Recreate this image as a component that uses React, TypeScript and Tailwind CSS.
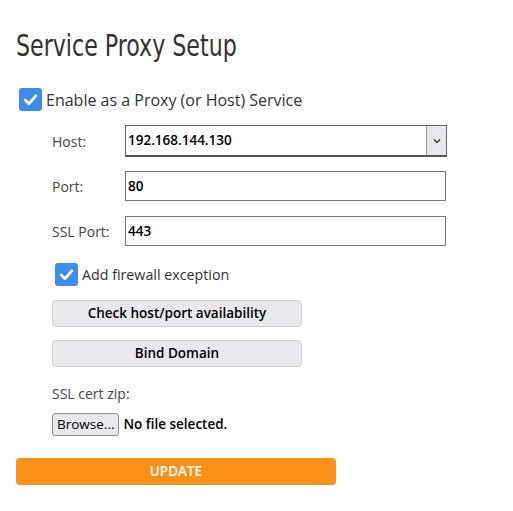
import React from "react";

function Check({ size = 22 }: { size?: number }) {
  return (
    <span
      className="inline-flex items-center justify-center rounded-[3px] bg-[#3d8ee8] shrink-0"
      style={{ width: size, height: size }}
    >
      <svg width={size - 6} height={size - 6} viewBox="0 0 16 16">
        <path d="M3 8.5 L6.5 12 L13 4.5" fill="none" stroke="white" strokeWidth="2.6" strokeLinecap="round" strokeLinejoin="round" />
      </svg>
    </span>
  );
}

export default function App() {
  return (
    <div className="bg-white w-[513px] h-[511px] text-[#333] pl-4 pt-[26px]" style={{ fontFamily: '"Open Sans", "Noto Sans", sans-serif' }}>
      <h1
        className="text-[30px] leading-[40px] text-[#333] origin-left scale-x-[0.82] whitespace-nowrap"
        style={{ fontFamily: '"DejaVu Sans Condensed", "DejaVu Sans", sans-serif', fontWeight: 200 }}
      >
        Service Proxy Setup
      </h1>
      <div className="flex items-center gap-[4px] mt-[22px] ml-[3px] h-[23px]">
        <Check size={23} />
        <span className="text-[16px] text-[#333]">Enable as a Proxy (or Host) Service</span>
      </div>

      <div className="ml-[36px] mt-[14px] flex flex-col">
        <div className="flex items-center h-[32px]">
          <span className="w-[73px] text-[14px] text-[#444]">Host:</span>
          <div className="flex w-[322px] h-[32px] border border-[#666] border-b-2 border-b-[#555]">
            <div className="flex-1 flex items-center pl-[2px] text-[13.5px] font-semibold text-black">192.168.144.130</div>
            <div className="w-[20px] bg-[#e8e8ec] border-l border-[#999] flex items-center justify-center">
              <svg width="8" height="6" viewBox="0 0 8 6">
                <path d="M1 1.5 L4 4.5 L7 1.5" fill="none" stroke="#333" strokeWidth="1.4" />
              </svg>
            </div>
          </div>
        </div>
        <div className="flex items-center h-[30px] mt-[14px]">
          <span className="w-[73px] text-[14px] text-[#444]">Port:</span>
          <div className="w-[321px] h-[30px] border border-[#777] flex items-center pl-[2px] text-[13.5px] font-semibold text-black">80</div>
        </div>
        <div className="flex items-center h-[30px] mt-[15px]">
          <span className="w-[73px] text-[14px] text-[#444]">SSL Port:</span>
          <div className="w-[321px] h-[30px] border border-[#777] flex items-center pl-[2px] text-[13.5px] font-semibold text-black">443</div>
        </div>

        <div className="flex items-center gap-[4px] mt-[17px] ml-[3px] h-[23px]">
          <Check size={23} />
          <span className="text-[14.25px] text-[#333]">Add firewall exception</span>
        </div>

        <button className="mt-[14px] w-[250px] h-[27px] rounded-[4px] bg-[#e9e9ed] border border-[#d0d0d5] text-[13.5px] font-semibold text-black">
          Check host/port availability
        </button>
        <button className="mt-[13px] w-[250px] h-[27px] rounded-[4px] bg-[#e9e9ed] border border-[#d0d0d5] text-[13.5px] font-semibold text-black">
          Bind Domain
        </button>

        <div className="mt-[17px] text-[14px] text-[#444] leading-[20px]">SSL cert zip:</div>
        <div className="mt-[9px] flex items-center gap-[4px]">
          <button className="h-[23px] px-[4px] rounded-[3px] bg-[#e9e9ed] border border-[#8f8f9d] text-[13.5px] text-black">Browse...</button>
          <span className="text-[13.5px] text-black font-semibold">No file selected.</span>
        </div>
      </div>

      <button className="mt-[22px] w-[320px] h-[27px] rounded-[4px] bg-[#fb9119] text-white text-[13.5px] font-semibold">
        UPDATE
      </button>
    </div>
  );
}
